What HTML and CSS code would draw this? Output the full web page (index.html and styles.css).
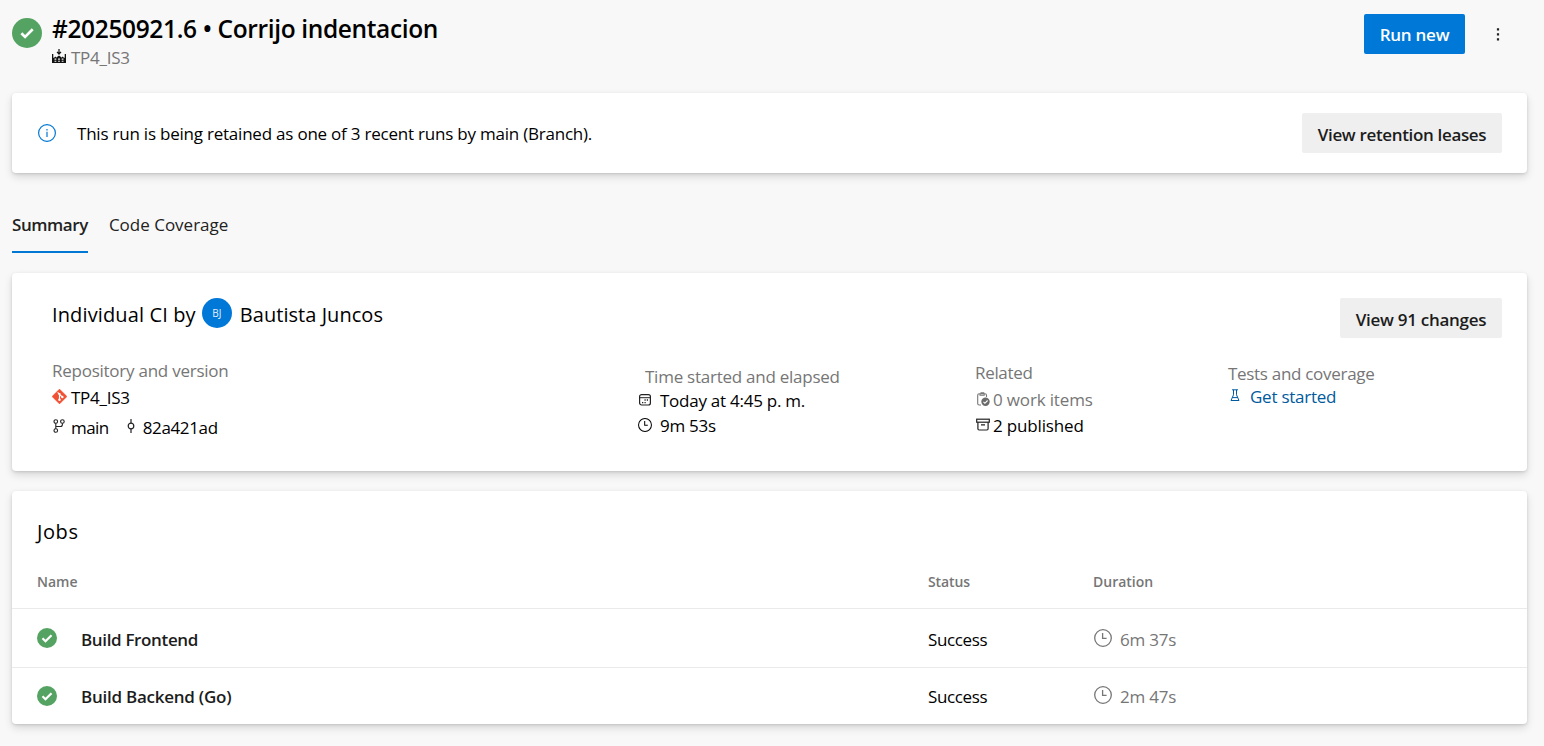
FILE: index.html
```html
<!DOCTYPE html>
<html lang="es">
<head>
<meta charset="utf-8">
<title>Pipeline run</title>
<link rel="stylesheet" href="styles.css">
</head>
<body>
<svg class="defs" aria-hidden="true">
  <symbol id="clock" viewBox="0 0 18 18"><circle cx="9" cy="9" r="8.3" fill="none" stroke="currentColor" stroke-width="1.3"/><path d="M8.6 4v5.4H12.6" fill="none" stroke="currentColor" stroke-width="1.3"/></symbol>
  <symbol id="ok" viewBox="0 0 20 20"><circle cx="10" cy="10" r="10" fill="#55a362"/><path d="M5.5 10.200l3 3 6-6" fill="none" stroke="#fff" stroke-width="2.3"/></symbol>
</svg>
<header class="top">
  <svg class="big-ok" viewBox="0 0 30 30"><circle cx="15" cy="15" r="15" fill="#55a362"/><path d="M9.4 15.200l3.700 3.700 7.600-7.600" fill="none" stroke="#fff" stroke-width="2.700"/></svg>
  <div class="heading">
    <h1><span class="t-title">#20250921.6 • Corrijo indentacion</span></h1>
    <div class="pipeline">
      <svg class="pipe-icon" viewBox="0 0 14 14"><path d="M0 5h1.300v4L4 7.500v1.300L7 6.500l3 2.300V7.500L12.700 9V5H14v9H0z" fill="#111"/><path d="M7 0v4.500M5 2.800l2 2.200 2-2.200" fill="none" stroke="#111" stroke-width="1.200"/><path d="M2.500 9.500h1.800v1.200H2.500zM6.100 9.500h1.800v1.200H6.100zM9.700 9.500h1.800v1.200H9.700zM2.500 11.700h1.800v1H2.500zM6.100 11.700h1.800v1H6.100zM9.700 11.700h1.800v1H9.700z" fill="#f8f8f8"/></svg>
      <span class="t-repo">TP4_IS3</span>
    </div>
  </div>
  <button class="btn primary"><span class="t-run">Run new</span></button>
  <svg class="more" viewBox="0 0 4 14"><path d="M.9 .2h2.200v2.200H.9zM.9 5.200h2.200v2.200H.9zM.9 10.200h2.200v2.200H.9z" fill="#222"/></svg>
</header>

<section class="card banner">
  <svg class="info" viewBox="0 0 18 18"><circle cx="9" cy="9" r="8.400" fill="none" stroke="#0078d4" stroke-width="1.200"/><path d="M9 7.800v5.200M9 5v1.500" stroke="#0078d4" stroke-width="1.200"/></svg>
  <span class="t-banner">This run is being retained as one of 3 recent runs by main (Branch).</span>
  <button class="btn"><span class="t-leases">View retention leases</span></button>
</section>

<nav class="tabs">
  <a class="tab active"><span class="t-summary">Summary</span></a>
  <a class="tab"><span class="t-cover">Code Coverage</span></a>
</nav>

<section class="card summary">
  <div class="byline">
    <span class="t-by">Individual CI by</span>
    <span class="avatar">BJ</span>
    <span class="t-name">Bautista Juncos</span>
    <button class="btn changes"><span class="t-changes">View 91 changes</span></button>
  </div>
  <div class="details">
    <div class="col repo">
      <div class="muted"><span class="t-rv">Repository and version</span></div>
      <div class="item"><svg class="i15" viewBox="0 0 16 16"><path d="M8 .2L15.800 8 8 15.800.2 8z" fill="#f05133" stroke="#f05133" stroke-linejoin="round"/><path d="M6 3.500L8 5.500v6M8 5.700l3 2.800" fill="none" stroke="#fff" stroke-width="1.200"/><circle cx="8" cy="11.500" r="1.300" fill="#fff"/><circle cx="11" cy="8.500" r="1.300" fill="#fff"/><circle cx="8" cy="5.500" r="1.200" fill="#fff"/></svg><span class="t-repo">TP4_IS3</span></div>
      <div class="item">
        <svg class="branch" viewBox="0 0 12 14" fill="none" stroke="#222" stroke-width="1.100"><circle cx="2.800" cy="2.500" r="1.800"/><circle cx="9.400" cy="2.500" r="1.800"/><circle cx="2.800" cy="11.500" r="1.800"/><path d="M2.800 4.300v5.400M9.400 4.300v1.200q0 2-2 2H2.800"/></svg><span class="t-main">main</span>
        <svg class="commit" viewBox="0 0 8 14" fill="none" stroke="#222" stroke-width="1.200"><circle cx="4" cy="7" r="2.800"/><path d="M4 0v4.200M4 9.800V14"/></svg><span class="t-hash">82a421ad</span>
      </div>
    </div>
    <div class="col time">
      <div class="muted"><span class="t-time">Time started and elapsed</span></div>
      <div class="item"><svg class="i13" viewBox="0 0 14 14"><rect x="1.600" y="1.600" width="10.800" height="10.400" rx="2" fill="none" stroke="#222" stroke-width="1.200"/><path d="M1.500 4.700h11" stroke="#222"/><path d="M6.500 7h1.200M8.800 7h1.200M4 9.600h1.300M6.500 9.600h1.200" stroke="#222" stroke-width="1.300"/></svg><span class="t-today">Today at 4:45 p. m.</span></div>
      <div class="item"><svg class="i13"><use href="#clock"/></svg><span class="t-dur">9m 53s</span></div>
    </div>
    <div class="col related">
      <div class="muted"><span class="t-related">Related</span></div>
      <div class="item muted"><svg class="i14" viewBox="0 0 14 14"><path d="M5 13H3.200Q1.700 13 1.700 11.500V3.300Q1.700 1.800 3.200 1.800H9Q10.500 1.800 10.500 3.300V5M4 1.800v1.500h4.200V1.800M4.500.7h3.200v1" fill="none" stroke="#777" stroke-width="1.100"/><circle cx="9.500" cy="9.700" r="4.200" fill="#6b6b6b"/><path d="M7.500 9.900l1.400 1.400 2.700-2.800" fill="none" stroke="#fff" stroke-width="1.100"/></svg><span class="t-work">0 work items</span></div>
      <div class="item"><svg class="i14" viewBox="0 0 14 14" fill="none" stroke="#222" stroke-width="1.200"><rect x=".7" y="1.200" width="12.600" height="3"/><path d="M1.900 4.200v6.600q0 1.200 1.200 1.200h7.800q1.200 0 1.200-1.200V4.200M5 6.900h4"/></svg><span class="t-pub">2 published</span></div>
    </div>
    <div class="col tests">
      <div class="muted"><span class="t-tests">Tests and coverage</span></div>
      <div class="item link"><svg class="flask" viewBox="0 0 10 13" fill="none" stroke="#005a9e" stroke-width="1"><path d="M2 .8h6M3.500.8v5L1 11.500h8L6.500 5.800v-5M2.300 8.600h5.400"/></svg><span class="t-get">Get started</span></div>
    </div>
  </div>
</section>

<section class="card jobs">
  <h2><span class="t-jobs">Jobs</span></h2>
  <div class="row head"><span>Name</span><span class="t-hstatus">Status</span><span>Duration</span></div>
  <div class="row job">
    <div class="jobname"><svg class="ok"><use href="#ok"/></svg><span class="t-front">Build Frontend</span></div>
    <span class="t-success">Success</span>
    <div class="dur"><svg class="i18"><use href="#clock"/></svg><span class="t-jdur">6m 37s</span></div>
  </div>
  <div class="row job last">
    <div class="jobname"><svg class="ok"><use href="#ok"/></svg><span class="t-back">Build Backend (Go)</span></div>
    <span class="t-success">Success</span>
    <div class="dur"><svg class="i18"><use href="#clock"/></svg><span class="t-jdur">2m 47s</span></div>
  </div>
</section>
</body>
</html>
```
FILE: styles.css
```css
* { box-sizing: border-box; }
body {
  margin: 0;
  padding: 0 17px 0 12px;
  height: 746px;
  overflow: hidden;
  background: #f8f8f8;
  color: #000;
  font: 17px/24px "Open Sans", "Noto Sans", sans-serif;
  white-space: nowrap;
}
svg { flex: none; display: block; }
.defs { position: absolute; width: 0; height: 0; }
h1, h2 { margin: 0; font-weight: 400; }

/* letter-spacing per label */
.t-title { letter-spacing: -.36px; }
.t-repo, .t-get { letter-spacing: -.25px; }
.t-work, .t-pub { letter-spacing: -.16px; }
.t-run { letter-spacing: -.25px; }
.t-banner { letter-spacing: -.22px; }
.t-leases { letter-spacing: -.34px; }
.t-summary { letter-spacing: -.43px; }
.t-by { letter-spacing: .13px; }
.t-name { letter-spacing: .05px; }
.t-changes { letter-spacing: -.27px; }
.t-rv, .t-time, .t-today, .t-dur { letter-spacing: -.25px; }
.t-tests { letter-spacing: -.3px; }
.t-main { letter-spacing: -.55px; }
.t-hash, .t-success { letter-spacing: -.36px; }
.t-related { letter-spacing: -.32px; }
.t-jobs { letter-spacing: .6px; }
.t-hstatus { letter-spacing: -.1px; }
.t-front { letter-spacing: -.35px; }
.t-back { letter-spacing: -.25px; }
.t-jdur { letter-spacing: -.2px; }

.top { display: flex; height: 93px; align-items: flex-start; }
.big-ok { width: 30px; height: 30px; margin-top: 18px; }
.heading { margin: 13px auto 0 10px; }
h1 { font-size: 24.500px; line-height: 32px; font-weight: 600; }
.pipeline { display: flex; align-items: flex-start; gap: 5px; padding-top: 1px; color: #767676; }
.pipe-icon { width: 14px; height: 14px; margin-top: 3px; }
.btn {
  height: 40px;
  padding: 3px 0 0;
  border: 0;
  border-radius: 2px;
  background: #efefef;
  color: #1c1c1c;
  font: 600 17px/24px "Open Sans", "Noto Sans", sans-serif;
  text-align: center;
  width: 200px;
}
.primary { width: 101px; margin-top: 14px; padding-top: 1px; background: #0078d7; color: #fff; }
.more { width: 4px; height: 14px; margin: 28px 27px 0 31px; }

.card {
  background: #fff;
  border-radius: 4px;
  box-shadow: 0 4px 9px rgba(0, 0, 0, .13), 0 1px 3px rgba(0, 0, 0, .13);
}
.banner { display: flex; height: 80px; align-items: center; padding: 0 25px 0 26px; }
.info { width: 18px; height: 18px; margin-right: 21px; }
.t-banner { padding-top: 2px; }
.banner .btn { margin-left: auto; }

.tabs { display: flex; gap: 21px; margin: 32px 0 20px; height: 48px; }
.tab { padding-top: 8px; height: 48px; color: #222; }
.tab.active { font-weight: 600; border-bottom: 2px solid #0078d4; }

.summary { height: 198px; padding: 25px 25px 0 40px; }
.byline { display: flex; height: 40px; font-size: 20px; line-height: 34px; }
.avatar {
  width: 30px;
  height: 30px;
  margin: 0 8px 0 6px;
  border-radius: 50%;
  background: #0078d7;
  color: #e2effa;
  font-size: 10px;
  line-height: 30px;
  text-align: center;
}
.changes { width: 162px; margin-left: auto; }
.details { display: grid; grid-template-columns: 586px 337px 253px 1fr; margin-top: 21px; align-items: start; }
.col { display: grid; }
.repo { grid-template-rows: 27px 30px 24px; }
.time { grid-template-rows: 24px 25px 24px; padding-top: 6px; }
.time > .muted { padding-left: 7px; }
.related { grid-template-rows: 27px 26px 24px; padding-top: 2px; }
.tests { grid-template-rows: 23px 24px; padding-top: 3px; }
.muted { color: #767676; }
.link { color: #005a9e; }
.item { display: flex; align-items: flex-start; }
.i15 { width: 15px; height: 15px; margin: 3px 4px 0 0; }
.branch { width: 12px; height: 14px; margin: 3px 6px 0 1px; }
.commit { width: 8px; height: 14px; margin: 3px 8px 0 18px; }
.i13 { width: 14px; height: 14px; margin: 4px 8px 0 0; }
.i14 { width: 14px; height: 14px; margin: 4px 3px 0 1px; }
.flask { width: 10px; height: 13px; margin: 4px 10px 0 2px; }

.jobs { height: 233px; margin-top: 20px; padding-top: 25px; }
h2 { font-size: 20px; line-height: 32px; padding-left: 25px; }
.row { display: grid; grid-template-columns: 891px 165px 1fr; padding-left: 25px; align-items: center; }
.head { height: 61px; border-bottom: 1px solid #eaeaea; color: #767676; font-size: 14px; font-weight: 600; padding-top: 7px; }
.job { height: 59px; border-bottom: 1px solid #eaeaea; padding-top: 4px; }
.last { height: 57px; border-bottom: 0; padding-top: 0; }
.jobname { display: flex; align-items: center; gap: 24px; font-weight: 600; color: #1c1c1c; }
.ok { width: 20px; height: 20px; margin-top: -4px; }
.last .ok { margin-top: -2px; }
.dur { display: flex; align-items: center; gap: 8px; color: #767676; }
.i18 { width: 18px; height: 18px; margin: -4px 0 0 1px; }
```
